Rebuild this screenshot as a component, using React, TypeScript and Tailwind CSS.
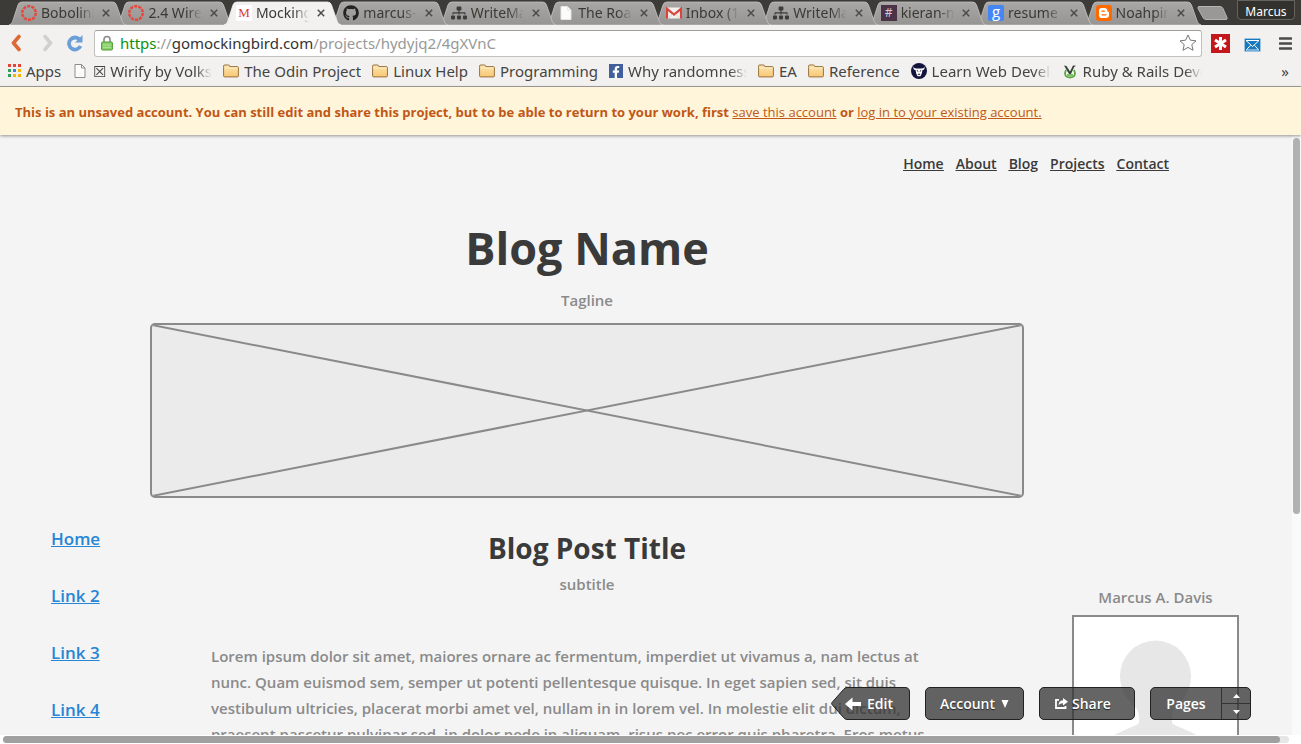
import type { ReactNode } from "react";
import { FaFacebookF, FaGithub, FaSitemap } from "react-icons/fa";

const uiFont = "font-['Noto_Sans',sans-serif]";
const pageFont = "font-['Open_Sans',sans-serif]";
const fade = "[mask-image:linear-gradient(to_right,black_72%,transparent)]";
const fadeLong = "[mask-image:linear-gradient(to_right,black_86%,transparent)]";

function RingIcon() {
  return (
    <svg viewBox="0 0 16 16" className="size-4">
      <circle cx="8" cy="8" r="6.800" fill="none" stroke="#e8463a" strokeWidth="2.400" strokeDasharray="3.170 1.100" />
    </svg>
  );
}

function MIcon() {
  return (
    <span className="flex size-4 items-center justify-center bg-white font-['Liberation_Serif',serif] text-[13px] leading-4 text-[#dc3c32]">
      M
    </span>
  );
}

function PageIcon({ line = "#8d8d8d" }: { line?: string }) {
  return (
    <svg viewBox="0 0 16 16" className="size-4">
      <path d="M3 1.500h6.500l3.500 3.500v9.500H3z" fill="#fcfcfc" stroke={line} />
      <path d="M9.500 1.500v3.500H13" fill="none" stroke={line} />
    </svg>
  );
}

function GmailIcon() {
  return (
    <svg viewBox="0 0 16 16" className="size-4">
      <rect x="1" y="2.500" width="14" height="11" rx="1" fill="#f3f1f0" />
      <path d="M1 13.500V3.800L8 9.500l7-5.700v9.700" fill="none" stroke="#d9453a" strokeWidth="2.200" />
      <path d="M3 13l3.500-4M13 13L9.500 9" stroke="#ccc" strokeWidth=".8" />
    </svg>
  );
}

function HashIcon() {
  return (
    <span className="flex size-4 items-center justify-center bg-[#4b3247] font-['Noto_Sans',sans-serif] text-[12px] leading-4 text-[#d8c4d6]">
      #
    </span>
  );
}

function GoogleIcon() {
  return (
    <span className="flex size-4 items-center justify-center rounded-[2px] bg-[#4487f4] pb-1 font-['Open_Sans',sans-serif] text-[15px] leading-4 text-white">
      g
    </span>
  );
}

function BloggerIcon() {
  return (
    <svg viewBox="0 0 16 16" className="size-4">
      <rect width="16" height="16" rx="3" fill="#ff6a00" />
      <path
        d="M5.800 3h2.700c1.700 0 2.900 1.200 2.900 2.700 0 .8.300 1.100 1 1.100.4 0 .6.300.6.700v2.700c0 1.600-1.200 2.800-2.800 2.800H5.800A2.800 2.800 0 0 1 3 10.200V5.800A2.800 2.800 0 0 1 5.800 3z"
        fill="#fff"
      />
      <path d="M6 6.200h2.300M6 9.800h4" stroke="#ff6a00" strokeWidth="1.300" strokeLinecap="round" />
    </svg>
  );
}

function FolderIcon() {
  return (
    <svg viewBox="0 0 16 16" className="size-4">
      <defs>
        <linearGradient id="folder" x1="0" y1="0" x2="0" y2="1">
          <stop offset="0" stopColor="#fde6b0" />
          <stop offset="1" stopColor="#f8c774" />
        </linearGradient>
      </defs>
      <path
        d="M.6 4.500V3q0-1 1-1h4q.8 0 1 .8l.2.800h7.600q1 0 1 1v8.300q0 1-1 1H1.600q-1 0-1-1z"
        fill="url(#folder)"
        stroke="#97713d"
      />
      <path d="M1.500 5h13" stroke="#fff3d3" strokeWidth=".8" />
    </svg>
  );
}

function FacebookIcon() {
  return (
    <span className="flex h-3.5 w-3.5 items-end justify-center bg-[#415f9d]">
      <FaFacebookF className="size-3 text-white" />
    </span>
  );
}

function BullIcon() {
  return (
    <svg viewBox="0 0 16 16" className="size-4">
      <circle cx="8" cy="8" r="8" fill="#13133b" />
      <path d="M3 3.200C2.600 5 3.600 5.400 5 5.400h6c1.400 0 2.400-.4 2-2.200 1.300 2 .3 3.700-1.600 4l-.6 3.300-1.300 2.700h-3L5.200 10.500l-.6-3.300C2.700 6.900 1.700 5.200 3 3.200z" fill="#fff" />
      <path d="M5.800 7.500l1.400.8M10.200 7.500l-1.400.8M6.800 11.300h2.400" stroke="#13133b" />
    </svg>
  );
}

function RubyRailsIcon() {
  return (
    <svg viewBox="0 0 16 16" className="size-4">
      <path d="M4 7c-2 4-1 7.500 4 7.500S14 11 12 7" fill="#f4fbf0" stroke="#58a840" strokeWidth="1.800" />
      <path d="M2 2.500l2.500.5L8 8.500l3-6 3 .3-1.800 1.200L9 11H7L3.500 5z" fill="#36413a" />
      <path d="M5 12h6" stroke="#58a840" strokeWidth="1.500" />
    </svg>
  );
}

function AppsIcon() {
  const rows = [
    ["#ea4335", "#ea4335", "#ea4335"],
    ["#2f9e58", "#3a82e4", "#f5b400"],
    ["#2f9e58", "#f5b400", "#f5b400"],
  ];
  return (
    <svg viewBox="0 0 13 13" className="size-[13px]">
      {rows.map((row, y) => row.map((c, x) => <rect key={`${x}${y}`} x={x * 5} y={y * 5} width="3" height="3" fill={c} />))}
    </svg>
  );
}

type TabData = { title: string; icon: ReactNode; z: string; active?: boolean };

const tabs: TabData[] = [
  { title: "Bobolink", icon: <RingIcon />, z: "z-[19]" },
  { title: "2.4 Wireframe", icon: <RingIcon />, z: "z-[18]" },
  { title: "Mockingbird", icon: <MIcon />, z: "z-20", active: true },
  { title: "marcus-davis", icon: <FaGithub className="size-4 text-[#222]" />, z: "z-[16]" },
  { title: "WriteMaps", icon: <FaSitemap className="size-4 text-[#3c3c3c]" />, z: "z-[15]" },
  { title: "The Road", icon: <PageIcon line="#e6e6e6" />, z: "z-[14]" },
  { title: "Inbox (12)", icon: <GmailIcon />, z: "z-[13]" },
  { title: "WriteMaps", icon: <FaSitemap className="size-4 text-[#3c3c3c]" />, z: "z-[12]" },
  { title: "kieran-ming", icon: <HashIcon />, z: "z-[11]" },
  { title: "resume tips", icon: <GoogleIcon />, z: "z-[10]" },
  { title: "Noahpinion", icon: <BloggerIcon />, z: "z-[9]" },
];

function Tab({ title, icon, z, active }: TabData) {
  return (
    <div className={`relative flex h-6 min-w-0 flex-1 items-center ${z}`}>
      <svg viewBox="0 0 118 24" preserveAspectRatio="none" className="absolute inset-y-0 left-0 h-6 w-[calc(100%+10px)]">
        <defs>
          <linearGradient id="tab" x1="0" y1="0" x2="0" y2="1">
            <stop offset="0" stopColor="#a8a7a5" />
            <stop offset="1" stopColor="#969593" />
          </linearGradient>
        </defs>
        <path
          d="M0 24q2.500-.5 3.500-3L9 4q1-3 4-3h91q3 0 4 3l6 17q1 2.500 4 3z"
          fill={active ? "#f2f1f0" : "url(#tab)"}
          stroke={active ? "#f2f1f0" : "#c4c3c1"}
          strokeWidth=".8"
        />
      </svg>
      <div className="relative flex min-w-0 flex-1 items-center pr-1 pl-3">
        <span className="shrink-0">{icon}</span>
        <span className={`ml-1 min-w-0 flex-1 overflow-hidden whitespace-nowrap text-[14px] leading-5 text-[#3a3934] ${fade}`}>
          {title}
        </span>
        <button type="button" aria-label={`Close ${title}`} className="ml-1.5 flex size-3 shrink-0 items-center justify-center">
          <svg viewBox="0 0 8 8" className="size-2">
            <path d="M.8.8l6.400 6.400M7.200.8L.8 7.200" stroke="#4c4b48" strokeWidth="1.500" />
          </svg>
        </button>
      </div>
    </div>
  );
}

function TabStrip() {
  return (
    <header className="flex h-[25px] items-end bg-[#3c3b37] pl-[9px]">
      <div className="isolate flex min-w-0 flex-1">
        {tabs.map((t, i) => (
          <Tab key={i} {...t} />
        ))}
      </div>
      <button type="button" aria-label="New tab" className="mr-2 ml-1.5 self-center">
        <svg viewBox="0 0 32 14" className="h-3.5 w-8">
          <path d="M2 .5h21q2 0 3 2l4 9q.7 2-1 2H9q-2 0-3-2L1 2.500Q.5.5 2 .5z" fill="#999896" stroke="#b5b4b2" />
        </svg>
      </button>
      <button
        type="button"
        className="mr-1.5 flex h-5 w-[58px] items-center justify-center self-start rounded-b-[4px] border border-[#66645e] bg-[#32312e] pt-1 text-[12px] leading-4 text-white"
      >
        Marcus
      </button>
    </header>
  );
}

function AddressBar() {
  return (
    <div className="flex h-9 items-center bg-[#f2f1f0] pl-2">
      <button type="button" aria-label="Back" className="flex w-4 justify-center">
        <svg viewBox="0 0 12 18" className="h-[18px] w-3">
          <path d="M9 2.500L3.500 9 9 15.500" fill="none" stroke="#dd6a35" strokeWidth="3.600" strokeLinejoin="round" strokeLinecap="round" />
        </svg>
      </button>
      <button type="button" aria-label="Forward" className="ml-4 flex w-4 justify-center">
        <svg viewBox="0 0 12 18" className="h-[18px] w-3">
          <path d="M3 2.500L8.500 9 3 15.500" fill="none" stroke="#d2d0ce" strokeWidth="3.600" strokeLinejoin="round" strokeLinecap="round" />
        </svg>
      </button>
      <button type="button" aria-label="Reload" className="ml-2.5 flex w-[18px] justify-center">
        <svg viewBox="0 0 18 18" className="size-[18px]">
          <path d="M13.500 5.500A6 6 0 1 0 14.500 12" fill="none" stroke="#6b9fd8" strokeWidth="3.800" />
          <path d="M16.500 1v7.500H9z" fill="#6b9fd8" />
        </svg>
      </button>
      <div className="ml-2.5 flex h-[27px] min-w-0 flex-1 items-center rounded-[3px] border border-[#c3c1be] border-t-[#9f9d9a] bg-white">
        <svg viewBox="0 0 12 16" className="ml-1.5 h-4 w-3 shrink-0">
          <path d="M3 8V4.500a3 3 0 0 1 6 0V8" fill="none" stroke="#8a8a8a" strokeWidth="1.600" />
          <rect x=".6" y="7" width="10.800" height="8" rx="1" fill="#8bd16b" stroke="#4f9a35" />
          <path d="M2 10h8M2 12.500h8" stroke="#a9e38e" />
        </svg>
        <div className="ml-[7px] grid min-w-0 flex-1 items-center text-[15px] leading-6">
          <input id="address" type="text" className="col-start-1 row-start-1 h-6 w-full bg-transparent outline-none" />
          <label htmlFor="address" className="col-start-1 row-start-1 truncate text-[#999]">
            <span className="text-[#0a930a]">https</span>://<span className="text-[#333]">gomockingbird.com</span>
            /projects/hydyjq2/4gXVnC
          </label>
        </div>
        <button type="button" aria-label="Bookmark this page" className="mr-1 shrink-0">
          <svg viewBox="0 0 18 18" className="size-[18px]">
            <path
              d="M9 1l2.400 5.200 5.600.6-4.200 3.800 1.200 5.700L9 13.400l-5 2.900 1.200-5.700L1 6.800l5.600-.6z"
              fill="#fff"
              stroke="#777"
              strokeLinejoin="round"
            />
          </svg>
        </button>
      </div>
      <button type="button" aria-label="Password manager" className="ml-[9px]">
        <svg viewBox="0 0 19 19" className="size-[19px]">
          <rect width="19" height="19" fill="#c4171b" />
          <path d="M9.500 3v13M4 6l11 7M15 6L4 13" stroke="#fff" strokeWidth="3" />
        </svg>
      </button>
      <button type="button" aria-label="Mail" className="mt-1 ml-3.5">
        <svg viewBox="0 0 17 14" className="h-3.5 w-[17px]">
          <rect x=".5" y=".5" width="16" height="13" rx="1" fill="#1a78bd" stroke="#9cc4e0" />
          <path d="M2 2.500h13L8.500 8.500zM2.500 11.800l4-4.500M14.500 11.800l-4-4.500" stroke="#fff" fill="none" />
          <path d="M2 12h13" stroke="#d5e8f5" />
        </svg>
      </button>
      <button type="button" aria-label="Menu" className="mr-[9px] ml-[18px]">
        <svg viewBox="0 0 13 13" className="size-[13px]">
          <path d="M1 1.500h11M1 6.500h11M1 11.500h11" stroke="#4b4a48" strokeWidth="2.600" strokeLinecap="round" />
        </svg>
      </button>
    </div>
  );
}

const bookmarks: { label: string; icon: ReactNode; width?: string }[] = [
  { label: "Apps", icon: <AppsIcon /> },
  { label: "☒ Wirify by Volkside", icon: <PageIcon />, width: `w-[119px] ${fadeLong}` },
  { label: "The Odin Project", icon: <FolderIcon /> },
  { label: "Linux Help", icon: <FolderIcon /> },
  { label: "Programming", icon: <FolderIcon /> },
  { label: "Why randomness is", icon: <FacebookIcon />, width: `w-[119px] ${fadeLong}` },
  { label: "EA", icon: <FolderIcon /> },
  { label: "Reference", icon: <FolderIcon /> },
  { label: "Learn Web Development", icon: <BullIcon />, width: `w-[119px] ${fadeLong}` },
  { label: "Ruby & Rails Development", icon: <RubyRailsIcon />, width: `w-[119px] ${fadeLong}` },
];

function BookmarksBar() {
  return (
    <nav className="flex h-[26px] items-center gap-[11px] border-b border-[#a3a1a0] bg-[#f2f1f0] pr-3 pb-1.5 pl-2 text-[15px] leading-5 text-[#454442]">
      {bookmarks.map((b) => (
        <a key={b.label} href="#" className="flex shrink-0 items-center gap-[5px]">
          {b.icon}
          <span className={`overflow-hidden whitespace-nowrap ${b.width ?? ""}`}>{b.label}</span>
        </a>
      ))}
      <button type="button" aria-label="More bookmarks" className="ml-auto">
        »
      </button>
    </nav>
  );
}

function Banner() {
  return (
    <p className="relative z-10 bg-[#fff5da] px-[15px] pt-[15px] pb-[13px] text-[13px] leading-5 font-bold text-[#c05717] shadow-[0_1px_3px_rgba(0,0,0,0.4)]">
      This is an unsaved account. You can still edit and share this project, but to be able to return to your work, first{" "}
      <a href="#" className="font-normal underline">
        save this account
      </a>{" "}
      or{" "}
      <a href="#" className="font-normal underline">
        log in to your existing account.
      </a>
    </p>
  );
}

function Placeholder() {
  return (
    <div className="mt-[11px] h-[175px] overflow-hidden rounded-[5px] border-2 border-[#8a8a8a] bg-[#ebebeb]">
      <svg viewBox="0 0 870 171" preserveAspectRatio="none" className="size-full">
        <path d="M0 0l870 171M870 0L0 171" stroke="#8a8a8a" strokeWidth="2" />
      </svg>
    </div>
  );
}

function Portrait() {
  return (
    <div className="mt-[6px] border-2 border-[#8a8a8a] bg-white">
      <svg viewBox="0 0 163 163" className="block w-full">
        <path
          d="M81.500 23.500a35.500 35.500 0 0 1 35.500 35.500c0 16-9 25-16 32-4 5-3 10-3 15 6 7 49 11 57 57H8c8-46 51-50 57-57 0-5 1-10-3-15-7-7-16-16-16-32a35.500 35.500 0 0 1 35.500-35.500z"
          fill="#e7e7e7"
        />
      </svg>
    </div>
  );
}

const toolButton = "h-[33px] rounded-[5px] border border-[#222] bg-[#323232]/75 [text-shadow:0_1px_1px_#222]";

function Toolbar() {
  return (
    <div className="absolute right-[41px] bottom-[15px] flex gap-[15px] text-[14px] leading-5 font-semibold text-white">
      <button type="button" className="relative flex h-[33px] w-[79px] items-center pl-3.5">
        <svg viewBox="0 0 79 33" className="absolute inset-0 h-[33px] w-[79px]">
          <path
            d="M16 .5h58q4.500 0 4.500 4.500v23q0 4.500-4.500 4.500H16q-2 0-3.500-2L1 17.500q-.8-1 0-2L12.500 2.500q1.500-2 3.500-2z"
            fill="#323232"
            fillOpacity=".75"
            stroke="#222"
          />
        </svg>
        <svg viewBox="0 0 16 14" className="relative h-3.5 w-4">
          <path d="M0 7l7.500-6.500v4.500H16v4H7.500v4.500z" fill="#fff" />
        </svg>
        <span className="relative ml-1.5">Edit</span>
      </button>
      <button type="button" className={`${toolButton} flex w-[99px] items-center justify-center gap-1.5`}>
        Account
        <svg viewBox="0 0 8 8" className="size-2">
          <path d="M.5 0h7L4 8z" fill="#fff" />
        </svg>
      </button>
      <button type="button" className={`${toolButton} flex w-24 items-center gap-1 pl-[15px]`}>
        <svg viewBox="0 0 13 11" className="h-[11px] w-[13px]">
          <path d="M4 1.800H1v8.200h9.500V8" fill="none" stroke="#fff" strokeWidth="1.800" />
          <path d="M8 0l5 3.800-5 3.700V5.300C5.500 5.300 4.500 6 3.500 7.800 3.500 4.500 5 2.500 8 2.300z" fill="#fff" />
        </svg>
        Share
      </button>
      <div className={`${toolButton} flex w-[101px]`}>
        <button type="button" className="flex-1">
          Pages
        </button>
        <div className="flex w-[29px] flex-col border-l border-[#333]">
          <button type="button" aria-label="Previous page" className="flex flex-1 items-center justify-center border-b border-[#333]">
            <svg viewBox="0 0 7 4" className="h-1 w-[7px]">
              <path d="M0 4h7L3.500 0z" fill="#fff" />
            </svg>
          </button>
          <button type="button" aria-label="Next page" className="flex flex-1 items-center justify-center">
            <svg viewBox="0 0 7 4" className="h-1 w-[7px]">
              <path d="M0 0h7L3.500 4z" fill="#fff" />
            </svg>
          </button>
        </div>
      </div>
    </div>
  );
}

function Wireframe() {
  return (
    <main className="relative min-w-0 flex-1 overflow-hidden bg-[#f4f4f4] text-[#8a8a8a]">
      <nav className="flex justify-end gap-3 pt-[19px] pr-[123px] text-[14px] leading-5 font-semibold text-[#3a3a3a] underline">
        {["Home", "About", "Blog", "Projects", "Contact"].map((l) => (
          <a key={l} href="#">
            {l}
          </a>
        ))}
      </nav>
      <div className="mt-11 mr-[268px] ml-[150px] text-center">
        <h1 className="text-[45px] leading-[60px] font-bold text-[#3a3a3a]">Blog Name</h1>
        <p className="mt-2.5 text-[15px] leading-6 font-semibold">Tagline</p>
        <Placeholder />
      </div>
      <div className="flex pr-[53px]">
        <ul className="flex w-[211px] shrink-0 flex-col gap-[33px] pt-[29px] pl-[51px] text-[17px] leading-6 font-semibold text-[#2685d5]">
          {["Home", "Link 2", "Link 3", "Link 4"].map((l) => (
            <li key={l}>
              <a href="#" className="underline">
                {l}
              </a>
            </li>
          ))}
        </ul>
        <article className="min-w-0 flex-1 pt-[30px]">
          <h2 className="text-center text-[28px] leading-10 font-bold text-[#3a3a3a]">Blog Post Title</h2>
          <p className="mt-1 text-center text-[15px] leading-6 font-semibold">subtitle</p>
          <p className="mt-[47px] text-[15px] leading-[26px] font-semibold whitespace-nowrap">
            Lorem ipsum dolor sit amet, maiores ornare ac fermentum, imperdiet ut vivamus a, nam lectus at
            <br />
            nunc. Quam euismod sem, semper ut potenti pellentesque quisque. In eget sapien sed, sit duis
            <br />
            vestibulum ultricies, placerat morbi amet vel, nullam in in lorem vel. In molestie elit dui dictum,
            <br />
            praesent nascetur pulvinar sed, in dolor pede in aliquam, risus nec error quis pharetra. Eros metus
          </p>
        </article>
        <aside className="ml-[109px] w-[167px] shrink-0 pt-[87px]">
          <p className="text-center text-[15px] leading-6 font-semibold">Marcus A. Davis</p>
          <Portrait />
        </aside>
      </div>
      <Toolbar />
    </main>
  );
}

export default function App() {
  return (
    <div className={`flex h-screen flex-col overflow-hidden bg-white ${uiFont}`}>
      <TabStrip />
      <AddressBar />
      <BookmarksBar />
      <div className={`flex min-h-0 flex-1 flex-col ${pageFont}`}>
        <Banner />
        <div className="flex min-h-0 flex-1">
          <Wireframe />
          <div className="w-[9px] bg-[#fafafa] px-px pt-[3px]">
            <div className="h-[63%] rounded-full bg-[#b1b1b1]" />
          </div>
        </div>
        <div className="h-[9px] bg-white py-px pr-3 pl-[3px]">
          <div className="h-[7px] rounded-full bg-[#e6e6e6] pr-[9px]">
            <div className="h-full rounded-full bg-[#a0a0a0]" />
          </div>
        </div>
      </div>
    </div>
  );
}
